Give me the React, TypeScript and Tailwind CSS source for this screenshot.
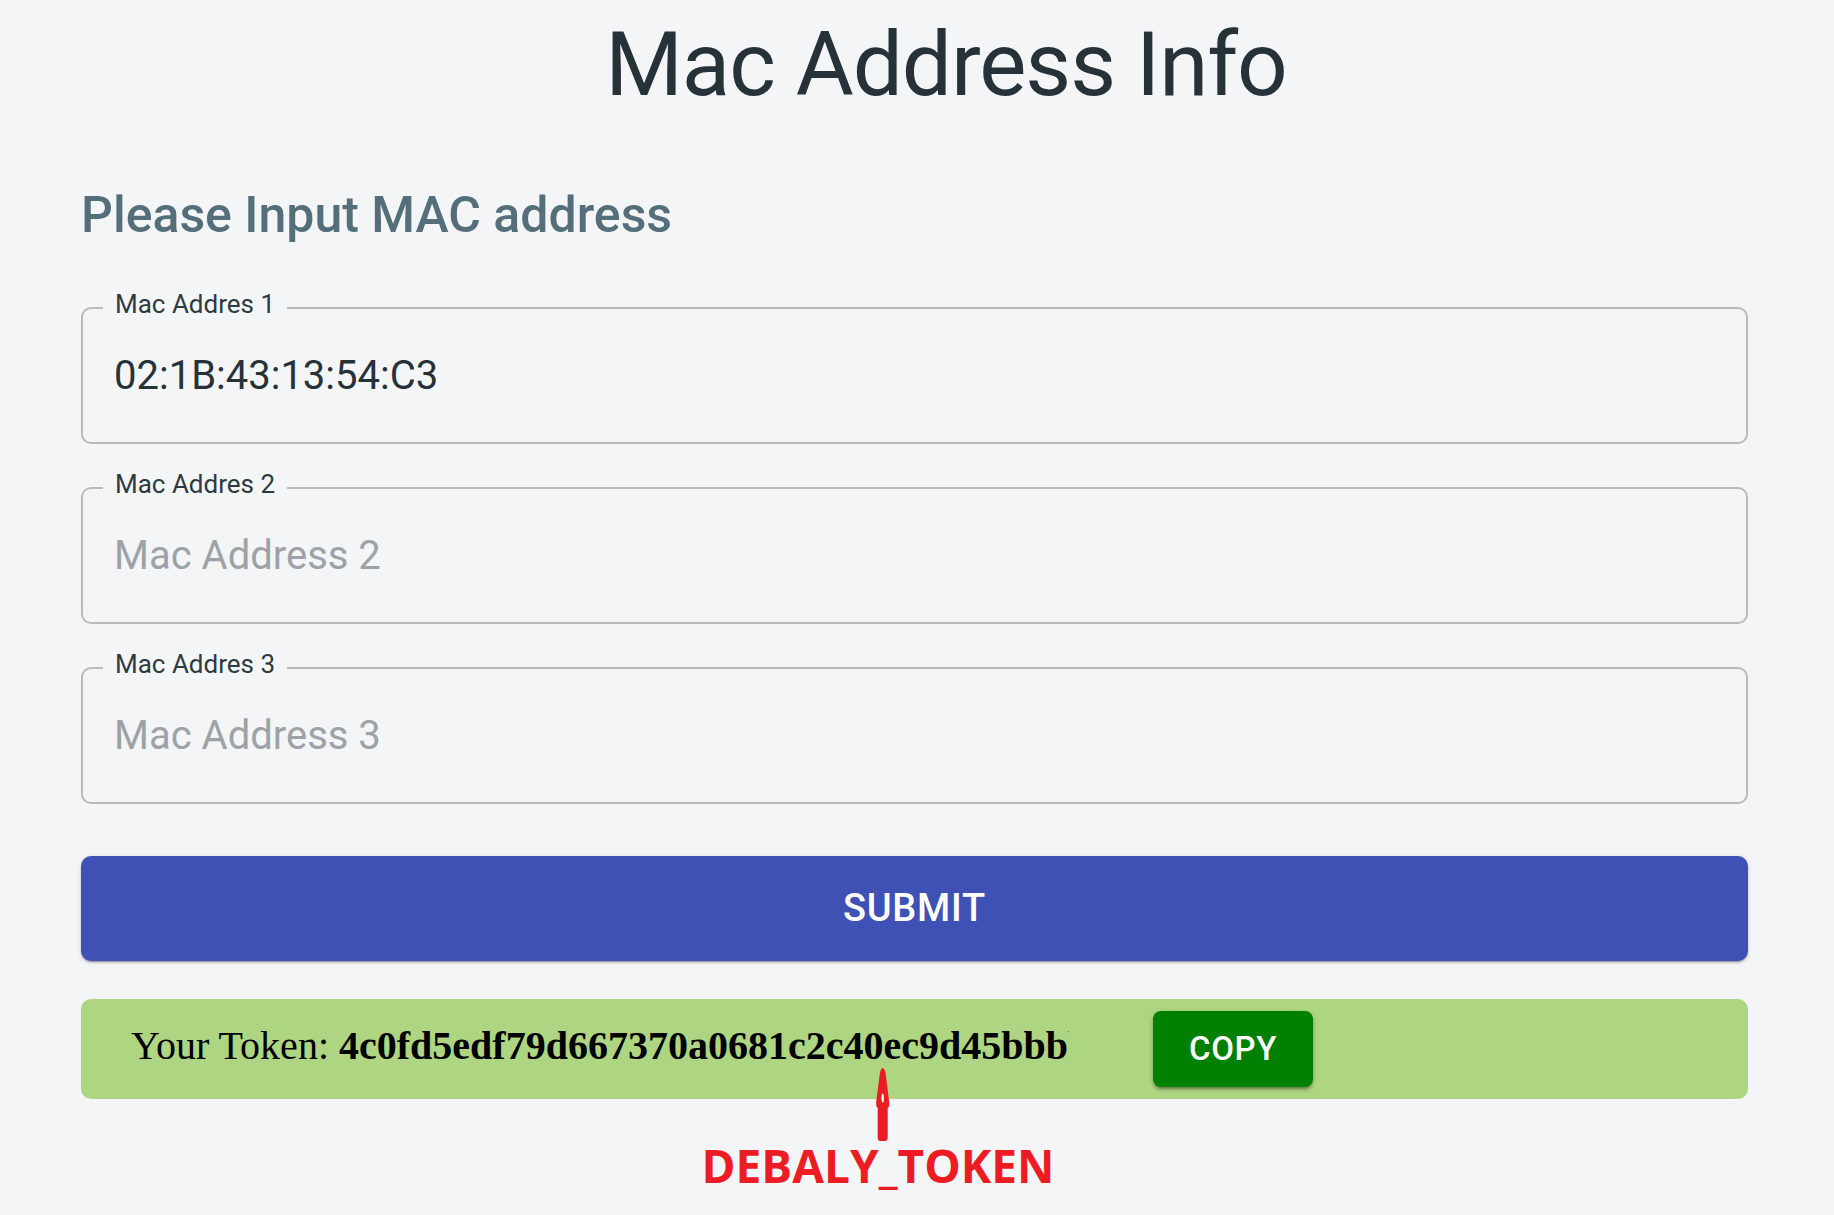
import { useState } from "react";

const TOKEN = "4c0fd5edf79d667370a0681c2c40ec9d45bbbb2e7a1c9f03d";

function MacField({ label, value }: { label: string; value?: string }) {
  return (
    <div className="relative h-[137px] rounded-[10px] border-2 border-[#bababa] flex items-center pl-[31px]">
      <span className="absolute left-[20px] top-[-18px] px-[12px] bg-[#f4f5f7] text-[26px] leading-none text-[#2d3a40]">
        {label}
      </span>
      <input
        type="text"
        defaultValue={value}
        placeholder={label.replace("Addres", "Address")}
        className="w-full bg-transparent outline-0 text-[40px] leading-none text-[#263238] placeholder:text-[#9ea2a6]"
      />
    </div>
  );
}

function Arrow() {
  return (
    <svg width="17" height="75" viewBox="0 0 17 75" className="ml-[9px]">
      <path
        d="M8.7 1 Q11 1.5 11.8 8 L15.2 35 Q15.6 39 14 41 L3.4 41 Q1.8 39 2.2 35 L5.6 8 Q6.4 1.5 8.7 1 Z"
        fill="#ed1c24"
      />
      <rect x="3.7" y="38" width="10" height="36" rx="3" fill="#ed1c24" />
      <ellipse cx="8.7" cy="31" rx="1.2" ry="4.5" fill="#ffffff" />
    </svg>
  );
}

export default function App() {
  const [copied, setCopied] = useState(false);

  return (
    <div className="min-h-screen bg-[#f4f5f7] pl-[81px] pr-[86px] pt-[20px] pb-[20px] font-['Roboto',sans-serif]">
      <h1 className="pl-[63px] text-center text-[89px] leading-none font-normal tracking-[-0.012em] text-[#263238]">
        Mac Address Info
      </h1>

      <h2 className="mt-[81px] text-[50px] leading-none font-medium text-[#546e7a]">
        Please Input MAC address
      </h2>

      <div className="mt-[67px] flex flex-col gap-[43px]">
        <MacField label="Mac Addres 1" value="02:1B:43:13:54:C3" />
        <MacField label="Mac Addres 2" />
        <MacField label="Mac Addres 3" />
      </div>

      <button className="mt-[52px] w-full h-[105px] rounded-[10px] bg-[#3f51b5] text-white text-[38px] font-medium tracking-[0.02em] shadow-[0_3px_1px_-2px_rgba(0,0,0,0.2),0_2px_2px_0_rgba(0,0,0,0.14),0_1px_5px_0_rgba(0,0,0,0.12)]">
        SUBMIT
      </button>

      <div className="mt-[38px] h-[100px] rounded-[10px] bg-[#aed581] flex items-center pl-[50px]">
        <div className="mb-[7px] w-[938px] overflow-hidden whitespace-nowrap font-['Liberation_Serif',serif] text-[40px] leading-none text-black">
          Your Token: <b>{TOKEN}</b>
        </div>
        <button
          onClick={() => setCopied(true)}
          className="ml-[84px] w-[160px] h-[76px] rounded-[8px] bg-[#008000] text-white text-[33px] font-medium tracking-[0.02em] shadow-[0_3px_3px_-1px_rgba(0,0,0,0.3),0_2px_5px_0_rgba(0,0,0,0.2)]"
        >
          {copied ? "COPIED" : "COPY"}
        </button>
      </div>

      <div className="mt-[-32px] ml-[597px] w-[400px] flex flex-col items-center">
        <Arrow />
        <div className="font-['Open_Sans',sans-serif] font-bold text-[46px] leading-none text-[#ed1c24]">
          DEBALY_TOKEN
        </div>
      </div>
    </div>
  );
}
